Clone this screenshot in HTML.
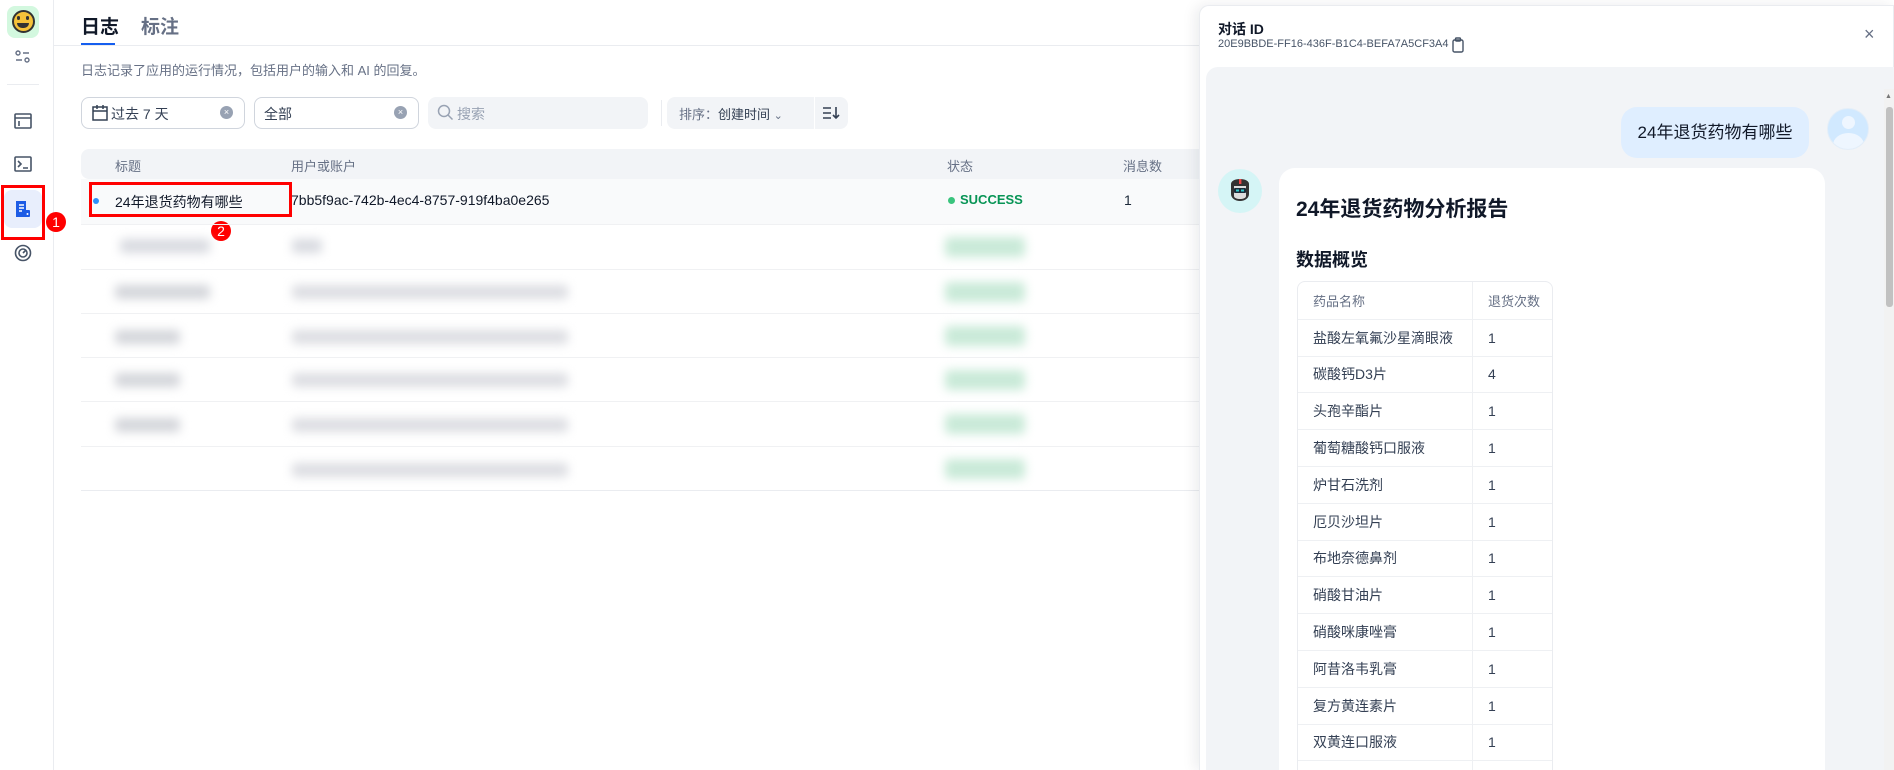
<!DOCTYPE html>
<html><head><meta charset="utf-8"><style>
*{box-sizing:border-box;margin:0;padding:0}
html{width:1894px;height:770px;overflow:hidden}
body{width:1894px;height:770px;overflow:hidden;background:#fff;font-family:"Liberation Sans","Noto Sans CJK SC",sans-serif;color:#1d2939;position:relative}
.abs{position:absolute}
.side{left:0;top:0;width:54px;height:770px;background:#fff;border-right:1px solid #eaecf0}
.blur{position:absolute;filter:blur(5px);border-radius:4px}
.tr{position:absolute;left:81px;width:1120px;height:1px;background:#f0f1f3}
.ct td{height:36.8px;border-top:1px solid #eef0f3;font-size:14px;color:#344054;padding-left:15px}
.ct td+td{border-left:1px solid #eef0f3}
</style></head><body>
<div class="abs side">
  <div class="abs" style="left:7px;top:6px;width:32px;height:32px;border-radius:8px;background:#d3f8df"></div>
  <div class="abs" style="left:12px;top:10px;width:23px;height:23px;border-radius:50%;background:#f5c23a;border:2px solid #333"></div>
  <div class="abs" style="left:17px;top:16px;width:3px;height:4px;background:#333;border-radius:2px"></div>
  <div class="abs" style="left:26px;top:16px;width:3px;height:4px;background:#333;border-radius:2px"></div>
  <div class="abs" style="left:17px;top:23px;width:12px;height:5px;background:#333;border-radius:0 0 6px 6px"></div>
  <svg class="abs" style="left:15px;top:50px" width="16" height="14" viewBox="0 0 16 14" fill="none" stroke="#667085" stroke-width="1.4"><circle cx="3" cy="3" r="2"/><path d="M8 3h6M1 10h6"/><circle cx="12" cy="10" r="2"/></svg>
  <div class="abs" style="left:7px;top:84px;width:32px;height:1px;background:#eaecf0"></div>
  <svg class="abs" style="left:14px;top:113px" width="18" height="16" viewBox="0 0 18 16" fill="none" stroke="#475467" stroke-width="1.6"><rect x="1" y="1" width="16" height="14" rx="1"/><path d="M1 5h16M5 8v5"/></svg>
  <svg class="abs" style="left:14px;top:156px" width="18" height="16" viewBox="0 0 18 16" fill="none" stroke="#475467" stroke-width="1.6"><rect x="1" y="1" width="16" height="14" rx="1"/><path d="M4 5l3 3-3 3M9 12h5"/></svg>
  <div class="abs" style="left:4px;top:190px;width:38px;height:38px;border-radius:8px;background:#e8eefc"></div>
  <svg class="abs" style="left:14px;top:200px" width="18" height="18" viewBox="0 0 18 18"><path d="M2 1h10l0 16H2z" fill="#1d5ce5"/><rect x="11" y="10" width="5" height="7" rx="1" fill="#1d5ce5"/><path d="M5 5h5M5 8h5M5 11h3" stroke="#fff" stroke-width="1.4"/><circle cx="13.5" cy="14" r="1" fill="#fff"/></svg>
  <svg class="abs" style="left:14px;top:244px" width="18" height="18" viewBox="0 0 18 18" fill="none" stroke="#475467" stroke-width="1.6"><circle cx="9" cy="9" r="7.5"/><circle cx="9" cy="9" r="4"/><path d="M9 9l3-3"/></svg>
</div>
<div class="abs" style="left:1px;top:185px;width:44px;height:55px;border:3px solid #f00"></div>
<div class="abs" style="left:46px;top:212px;width:20px;height:20px;border-radius:50%;background:#f00;color:#fff;font-size:14px;text-align:center;line-height:20px">1</div>

<div class="abs" style="left:81px;top:12px;font-size:19px;font-weight:bold;color:#101828">日志</div>
<div class="abs" style="left:141px;top:12px;font-size:19px;font-weight:bold;color:#667085">标注</div>
<div class="abs" style="left:81px;top:43px;width:34px;height:2px;background:#155eef"></div>
<div class="abs" style="left:54px;top:45px;width:1146px;height:1px;background:#eaecf0"></div>
<div class="abs" style="left:81px;top:60px;font-size:13px;color:#667085">日志记录了应用的运行情况，包括用户的输入和 AI 的回复。</div>

<div class="abs" style="left:81px;top:97px;width:164px;height:32px;border:1px solid #d0d5dd;border-radius:8px"></div>
<svg class="abs" style="left:92px;top:104px" width="16" height="17" viewBox="0 0 16 17" fill="none" stroke="#344054" stroke-width="1.5"><rect x="1" y="3" width="14" height="13"/><path d="M5 1v4M11 1v4M1 7h14"/></svg>
<div class="abs" style="left:111px;top:104px;font-size:14px;color:#344054">过去 7 天</div>
<div class="abs" style="left:220px;top:106px;width:13px;height:13px;border-radius:50%;background:#98a2b3;color:#fff;font-size:9px;text-align:center;line-height:13px">×</div>
<div class="abs" style="left:254px;top:97px;width:165px;height:32px;border:1px solid #d0d5dd;border-radius:8px"></div>
<div class="abs" style="left:264px;top:104px;font-size:14px;color:#344054">全部</div>
<div class="abs" style="left:394px;top:106px;width:13px;height:13px;border-radius:50%;background:#98a2b3;color:#fff;font-size:9px;text-align:center;line-height:13px">×</div>
<div class="abs" style="left:428px;top:97px;width:220px;height:32px;background:#f2f4f7;border-radius:8px"></div>
<svg class="abs" style="left:437px;top:104px" width="17" height="17" viewBox="0 0 17 17" fill="none" stroke="#98a2b3" stroke-width="1.5"><circle cx="7" cy="7" r="5.5"/><path d="M11 11l4.5 4.5"/></svg>
<div class="abs" style="left:457px;top:104px;font-size:14px;color:#98a2b3">搜索</div>
<div class="abs" style="left:661px;top:100px;width:1px;height:26px;background:#eaecf0"></div>
<div class="abs" style="left:667px;top:97px;width:181px;height:32px;background:#f2f4f7;border-radius:8px"></div>
<div class="abs" style="left:814px;top:97px;width:1px;height:32px;background:#fff"></div>
<div class="abs" style="left:679px;top:104px;font-size:13px;color:#667085">排序：<span style="color:#344054">创建时间</span> <span style="font-size:11px">⌄</span></div>
<svg class="abs" style="left:822px;top:105px" width="18" height="16" viewBox="0 0 18 16" fill="none" stroke="#344054" stroke-width="1.6"><path d="M1 3h8M1 8h8M1 13h8M14 2v11M11 10l3 3 3-3"/></svg>

<div class="abs" style="left:81px;top:149px;width:1120px;height:30px;background:#f2f4f7;border-radius:8px 0 0 8px"></div>
<div class="abs" style="left:115px;top:156px;font-size:13px;color:#667085">标题</div>
<div class="abs" style="left:291px;top:156px;font-size:13px;color:#667085">用户或账户</div>
<div class="abs" style="left:947px;top:156px;font-size:13px;color:#667085">状态</div>
<div class="abs" style="left:1123px;top:156px;font-size:13px;color:#667085">消息数</div>
<div class="abs" style="left:81px;top:179px;width:1120px;height:45px;background:#f9fafb"></div>
<div class="abs" style="left:93px;top:198px;width:6px;height:6px;border-radius:50%;background:#2e90fa"></div>
<div class="abs" style="left:115px;top:192px;font-size:14px;color:#101828">24年退货药物有哪些</div>
<div class="abs" style="left:291px;top:192px;font-size:14px;color:#101828">7bb5f9ac-742b-4ec4-8757-919f4ba0e265</div>
<div class="abs" style="left:948px;top:197px;width:7px;height:7px;border-radius:50%;background:#3ac47d"></div>
<div class="abs" style="left:960px;top:192px;font-size:13px;font-weight:bold;color:#079455">SUCCESS</div>
<div class="abs" style="left:1124px;top:192px;font-size:14px;color:#1d2939">1</div>
<div class="abs" style="left:89px;top:182px;width:203px;height:35px;border:3px solid #f00"></div>
<div class="abs" style="left:211px;top:221px;width:20px;height:20px;border-radius:50%;background:#f00;color:#fff;font-size:14px;text-align:center;line-height:20px">2</div>

<div class="tr" style="top:224px"></div><div class="tr" style="top:269px"></div><div class="tr" style="top:313px"></div><div class="tr" style="top:357px"></div><div class="tr" style="top:401px"></div><div class="tr" style="top:446px"></div><div class="tr" style="top:490px;background:#eaecf0"></div>
<div class="blur" style="left:120px;top:239px;width:90px;height:14px;background:#d8dae0"></div>
<div class="blur" style="left:292px;top:239px;width:30px;height:14px;background:#d8dae0"></div>
<div class="blur" style="left:115px;top:285px;width:95px;height:14px;background:#d3d5da"></div>
<div class="blur" style="left:115px;top:330px;width:65px;height:14px;background:#d3d5da"></div>
<div class="blur" style="left:115px;top:373px;width:65px;height:14px;background:#d3d5da"></div>
<div class="blur" style="left:115px;top:418px;width:65px;height:14px;background:#d3d5da"></div>
<div class="blur" style="left:292px;top:285px;width:276px;height:14px;background:#dcdde2"></div>
<div class="blur" style="left:292px;top:330px;width:276px;height:14px;background:#dcdde2"></div>
<div class="blur" style="left:292px;top:373px;width:276px;height:14px;background:#dcdde2"></div>
<div class="blur" style="left:292px;top:418px;width:276px;height:14px;background:#dcdde2"></div>
<div class="blur" style="left:292px;top:463px;width:276px;height:14px;background:#dcdde2"></div>
<div class="blur" style="left:945px;top:237px;width:80px;height:20px;background:#c9ead8"></div>
<div class="blur" style="left:945px;top:282px;width:80px;height:20px;background:#c9ead8"></div>
<div class="blur" style="left:945px;top:326px;width:80px;height:20px;background:#c9ead8"></div>
<div class="blur" style="left:945px;top:370px;width:80px;height:20px;background:#c9ead8"></div>
<div class="blur" style="left:945px;top:414px;width:80px;height:20px;background:#c9ead8"></div>
<div class="blur" style="left:945px;top:459px;width:80px;height:20px;background:#c9ead8"></div>

<div class="abs" style="left:1199px;top:5px;width:695px;height:765px;background:#fff;border-radius:10px 0 0 0;box-shadow:-4px 0 14px rgba(16,24,40,.08);border:1px solid #eaecf0;border-bottom:none"></div>
<div class="abs" style="left:1218px;top:19px;font-size:14px;font-weight:bold;color:#101828">对话 ID</div>
<div class="abs" style="left:1218px;top:38px;font-size:11px;color:#475467">20E9BBDE-FF16-436F-B1C4-BEFA7A5CF3A4</div>
<svg class="abs" style="left:1452px;top:37px" width="12" height="16" viewBox="0 0 12 16" fill="none" stroke="#475467" stroke-width="1.4"><rect x="1" y="3" width="10" height="12" rx="1.5"/><rect x="3.5" y="1" width="5" height="3" rx="1"/></svg>
<div class="abs" style="left:1864px;top:24px;font-size:18px;color:#667085">×</div>
<div class="abs" style="left:1206px;top:67px;width:688px;height:703px;background:#f2f4f7;border-radius:12px 0 0 0"></div>
<div class="abs" style="left:1884px;top:89px;width:10px;height:681px;background:#f2f2f2"></div>
<div class="abs" style="left:1886px;top:107px;width:7px;height:200px;background:#c1c1c1;border-radius:3px"></div>
<div class="abs" style="left:1885px;top:93px;font-size:7px;color:#777">▲</div>
<div class="abs" style="left:1621px;top:107px;width:188px;height:51px;background:#dfeeff;border-radius:16px;font-size:17px;color:#101828;line-height:51px;text-align:center">24年退货药物有哪些</div>
<div class="abs" style="left:1827px;top:108px;width:42px;height:42px;border-radius:50%;background:#d1e9ff;overflow:hidden;border:1px solid #e4eef8">
  <div class="abs" style="left:14px;top:7px;width:13px;height:13px;border-radius:50%;background:#eef6ff"></div>
  <div class="abs" style="left:5px;top:24px;width:31px;height:24px;border-radius:50%;background:#eef6ff"></div>
</div>
<div class="abs" style="left:1218px;top:169px;width:44px;height:44px;border-radius:50%;background:#d5f5f6"></div>
<svg class="abs" style="left:1226px;top:176px" width="28" height="28" viewBox="0 0 28 28"><path d="M5 8c0-3 4-5 9-5s9 2 9 5v10c0 4-4 7-9 7s-9-3-9-7z" fill="#333"/><path d="M8 10h12v10c0 2-3 3-6 3s-6-1-6-3z" fill="#ddd"/><rect x="8" y="12" width="12" height="5" rx="1" fill="#1c2c3a"/><rect x="10" y="13.5" width="3" height="2" fill="#3cc"/><rect x="15" y="13.5" width="3" height="2" fill="#3cc"/><rect x="13" y="3" width="2.4" height="5" fill="#e44"/></svg>
<div class="abs" style="left:1279px;top:168px;width:546px;height:602px;background:#fff;border-radius:16px 16px 0 0;overflow:hidden">
<div class="abs" style="left:17px;top:25px;font-size:21px;font-weight:bold;color:#101828;white-space:nowrap">24年退货药物分析报告</div>
<div class="abs" style="left:17px;top:78px;font-size:18px;font-weight:bold;color:#101828;white-space:nowrap">数据概览</div>
<table class="abs ct" style="left:18px;top:113px;width:256px;border:1px solid #eaecf0;border-radius:8px;border-collapse:separate;border-spacing:0">
<tr><td style="width:174px;height:36px;border-top:none;color:#667085;font-size:13px">药品名称</td><td style="color:#667085;font-size:13px;border-top:none">退货次数</td></tr>
<tr><td>盐酸左氧氟沙星滴眼液</td><td>1</td></tr>
<tr><td>碳酸钙D3片</td><td>4</td></tr>
<tr><td>头孢辛酯片</td><td>1</td></tr>
<tr><td>葡萄糖酸钙口服液</td><td>1</td></tr>
<tr><td>炉甘石洗剂</td><td>1</td></tr>
<tr><td>厄贝沙坦片</td><td>1</td></tr>
<tr><td>布地奈德鼻剂</td><td>1</td></tr>
<tr><td>硝酸甘油片</td><td>1</td></tr>
<tr><td>硝酸咪康唑膏</td><td>1</td></tr>
<tr><td>阿昔洛韦乳膏</td><td>1</td></tr>
<tr><td>复方黄连素片</td><td>1</td></tr>
<tr><td>双黄连口服液</td><td>1</td></tr>
<tr><td>&nbsp;</td><td></td></tr>
</table>
</div>
</body></html>
